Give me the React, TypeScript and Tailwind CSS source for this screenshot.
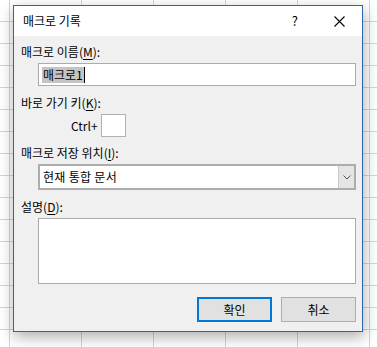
import React from "react";

const font = "font-['Noto_Sans_CJK_KR','Noto_Sans',sans-serif]";

function U({ children }: { children: React.ReactNode }) {
  return <span className="underline underline-offset-[2px] decoration-[1px]">{children}</span>;
}

export default function App() {
  return (
    <div
      className={`w-[377px] h-[347px] overflow-hidden bg-white bg-[linear-gradient(to_right,#d4d4d4_1px,transparent_1px),linear-gradient(to_bottom,#d4d4d4_1px,transparent_1px)] bg-[length:72px_22px] bg-[position:9px_21px] pt-[5px] pl-[13px] ${font} text-[12px] text-black`}
    >
      <div className="w-[350px] h-[327px] border border-[#2a67a8] bg-[#f0f0f0] shadow-[1px_5px_14px_rgba(0,0,0,0.32)] flex flex-col">
        {/* title bar */}
        <div className="h-[30px] bg-white flex items-center pl-[9px] pr-[17px] shrink-0">
          <span className="leading-[16px]">매크로 기록</span>
          <span className="ml-auto leading-[16px] text-[13px]">?</span>
          <svg className="ml-[36px]" width="11" height="11" viewBox="0 0 11 11">
            <path d="M0.5 0.5 L10.5 10.5 M10.5 0.5 L0.5 10.5" stroke="#000" strokeWidth="1.1" fill="none" />
          </svg>
        </div>
        {/* body */}
        <div className="flex flex-col pt-[8px] pr-[6px] pb-[9px]">
          <div className="pl-[7px] h-[16px] leading-[16px]">
            매크로 이름(<U>M</U>):
          </div>
          <div className="ml-[24px] mt-[3px] h-[23px] bg-white border border-[#ababab] flex items-center pl-[3px]">
            <span className="bg-[#c4c4c4] h-[16px] leading-[16px] px-[1px]">매크로1</span>
            <span className="w-[1px] h-[16px] bg-black"></span>
          </div>

          <div className="pl-[7px] mt-[9px] h-[16px] leading-[16px]">
            바로 가기 키(<U>K</U>):
          </div>
          <div className="mt-[3px] h-[23px] flex items-center pl-[57px]">
            <span className="w-[30px] leading-[16px]">Ctrl+</span>
            <div className="w-[25px] h-[23px] bg-white border border-[#b0b0b0]"></div>
          </div>

          <div className="pl-[7px] mt-[8px] h-[16px] leading-[16px]">
            매크로 저장 위치(<U>I</U>):
          </div>
          <div className="ml-[24px] mt-[3px] h-[26px] bg-white border-2 border-[#adadad] flex items-stretch">
            <span className="flex-1 pl-[3px] leading-[22px] tracking-[0.3px]">현재 통합 문서</span>
            <div className="w-[16px] bg-[#e5e5e5] border-l border-[#c8c8c8] flex items-center justify-center">
              <svg width="8" height="5" viewBox="0 0 8 5">
                <path d="M0.5 0.5 L4 4 L7.5 0.5" stroke="#555" strokeWidth="1" fill="none" />
              </svg>
            </div>
          </div>

          <div className="pl-[7px] mt-[9px] h-[16px] leading-[16px]">
            설명(<U>D</U>):
          </div>
          <div className="ml-[24px] mt-[3px] h-[66px] bg-white border border-[#ababab]"></div>

          <div className="mt-[13px] flex justify-end gap-[9px]">
            <button className="w-[75px] h-[25px] bg-[#e1e1e1] border-2 border-[#0078d7] leading-[16px]">
              확인
            </button>
            <button className="w-[75px] h-[25px] bg-[#e1e1e1] border border-[#adadad] leading-[16px]">
              취소
            </button>
          </div>
        </div>
      </div>
    </div>
  );
}
